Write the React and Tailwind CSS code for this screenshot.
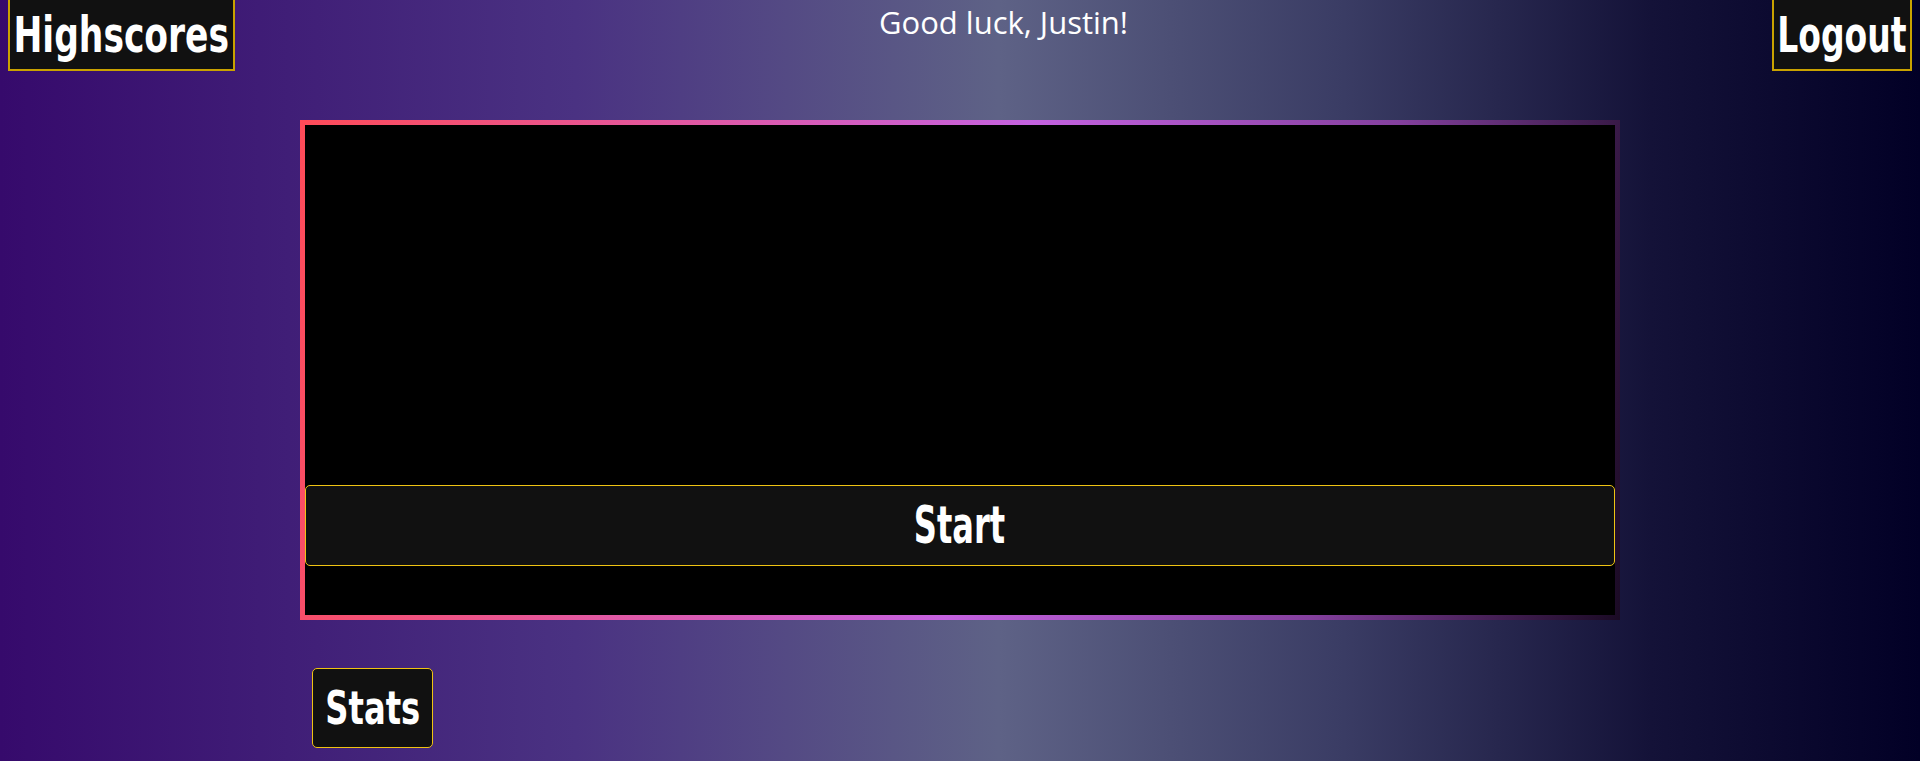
const impact = "font-['Impact','DejaVu_Sans',sans-serif] font-bold text-white"

function Label({ children, scale = 'scale-x-[0.7]' }) {
  return <span className={`inline-block whitespace-nowrap ${scale}`}>{children}</span>
}

export default function App() {
  return (
    <div className="min-h-[761px] w-full overflow-hidden bg-[linear-gradient(to_right,#360a6c_0%,#4a3282_30%,#5e6286_52%,#3a3c64_70%,#141238_86%,#020026_100%)]">
      {/* Header */}
      <div className="flex justify-between items-start px-2 h-[71px]">
        <button className={`-mt-[2px] h-[73px] w-[227px] flex items-center justify-center border-2 border-[#c9a200] bg-[#111111] text-[50px] leading-none ${impact}`}>
          <Label scale="scale-x-[0.69]">Highscores</Label>
        </button>
        <h1 className="mt-[7px] text-[31px] leading-none text-white font-['Open_Sans',sans-serif]">
          Good luck, Justin!
        </h1>
        <button className={`-mt-[2px] h-[73px] w-[140px] flex items-center justify-center border-2 border-[#c9a200] bg-[#111111] text-[50px] leading-none ${impact}`}>
          <Label scale="scale-x-[0.66]">Logout</Label>
        </button>
      </div>

      {/* Game */}
      <div className="mx-auto mt-[49px] w-[1320px] p-[5px] bg-[linear-gradient(100deg,#ff4b58_0%,#e4579c_25%,#c462e0_52%,#84409e_78%,#1a0a24_100%)]">
        <div className="bg-black h-[490px] flex flex-col">
          <div className="h-[360px]" />
          <button className={`h-[81px] w-full flex items-center justify-center rounded-[5px] border border-[#efc313] bg-[#111111] text-[51px] leading-none ${impact}`}>
            <Label scale="scale-x-[0.63]">Start</Label>
          </button>
        </div>
      </div>

      <div className="mx-auto w-[1320px] mt-[48px] pl-[12px]">
        <button className={`h-[80px] w-[121px] flex items-center justify-center rounded-[5px] border border-[#efc313] bg-[#111111] text-[46px] leading-none ${impact}`}>
          <Label scale="scale-x-[0.7]">Stats</Label>
        </button>
      </div>
    </div>
  )
}
